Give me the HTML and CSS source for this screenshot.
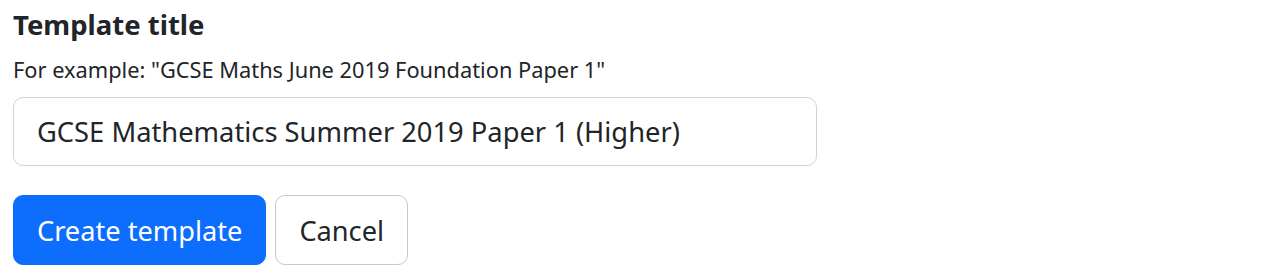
FILE: index.html
```html
<!DOCTYPE html>
<html lang="en">
<head>
  <meta charset="UTF-8">
  <meta name="viewport" content="width=device-width, initial-scale=1.0">
  <title>Template title</title>
  <link rel="stylesheet" href="styles.css">
</head>
<body>

  <!-- Template form -->
  <form class="template-form">
    <label for="template-title" class="form-label">Template title</label>
    <p class="form-text">For example: "GCSE Maths June 2019 Foundation Paper 1"</p>
    <input type="text" id="template-title" class="form-control" value="GCSE Mathematics Summer 2019 Paper 1 (Higher)">
    <div class="actions">
      <button type="submit" class="btn btn-primary">Create template</button>
      <button type="button" class="btn btn-outline">Cancel</button>
    </div>
  </form>

</body>
</html>
```

FILE: styles.css
```css
* {
  margin: 0;
  padding: 0;
  box-sizing: border-box;
}
body {
  font-family: "Noto Sans", "Open Sans", sans-serif;
  color: #212529;
  background-color: #fff;
}
.template-form {
  padding: 6px 13px;
  display: flex;
  flex-direction: column;
  align-items: flex-start;
}
.form-label {
  font-size: 27.5px;
  font-weight: 700;
  line-height: 38px;
}
.form-text {
  font-size: 21.8px;
  line-height: 30px;
  margin-top: 11px;
}
.form-control {
  width: 804px;
  height: 69px;
  margin-top: 12px;
  padding: 0 23px;
  font-family: inherit;
  font-size: 27.3px;
  color: #212529;
  border: 1px solid #cfd3d8;
  border-radius: 10px;
  outline: none;
}
.actions {
  display: flex;
  gap: 9px;
  margin-top: 29px;
}
.btn {
  height: 70px;
  padding: 0 23px;
  font-family: inherit;
  font-size: 27.2px;
  border-radius: 10px;
  cursor: pointer;
}
.btn-primary {
  background-color: #0d6efd;
  color: #fff;
  border: 1px solid #0d6efd;
}
.btn-outline {
  background-color: #fff;
  color: #212529;
  border: 1px solid #c8c8c8;
}
```
